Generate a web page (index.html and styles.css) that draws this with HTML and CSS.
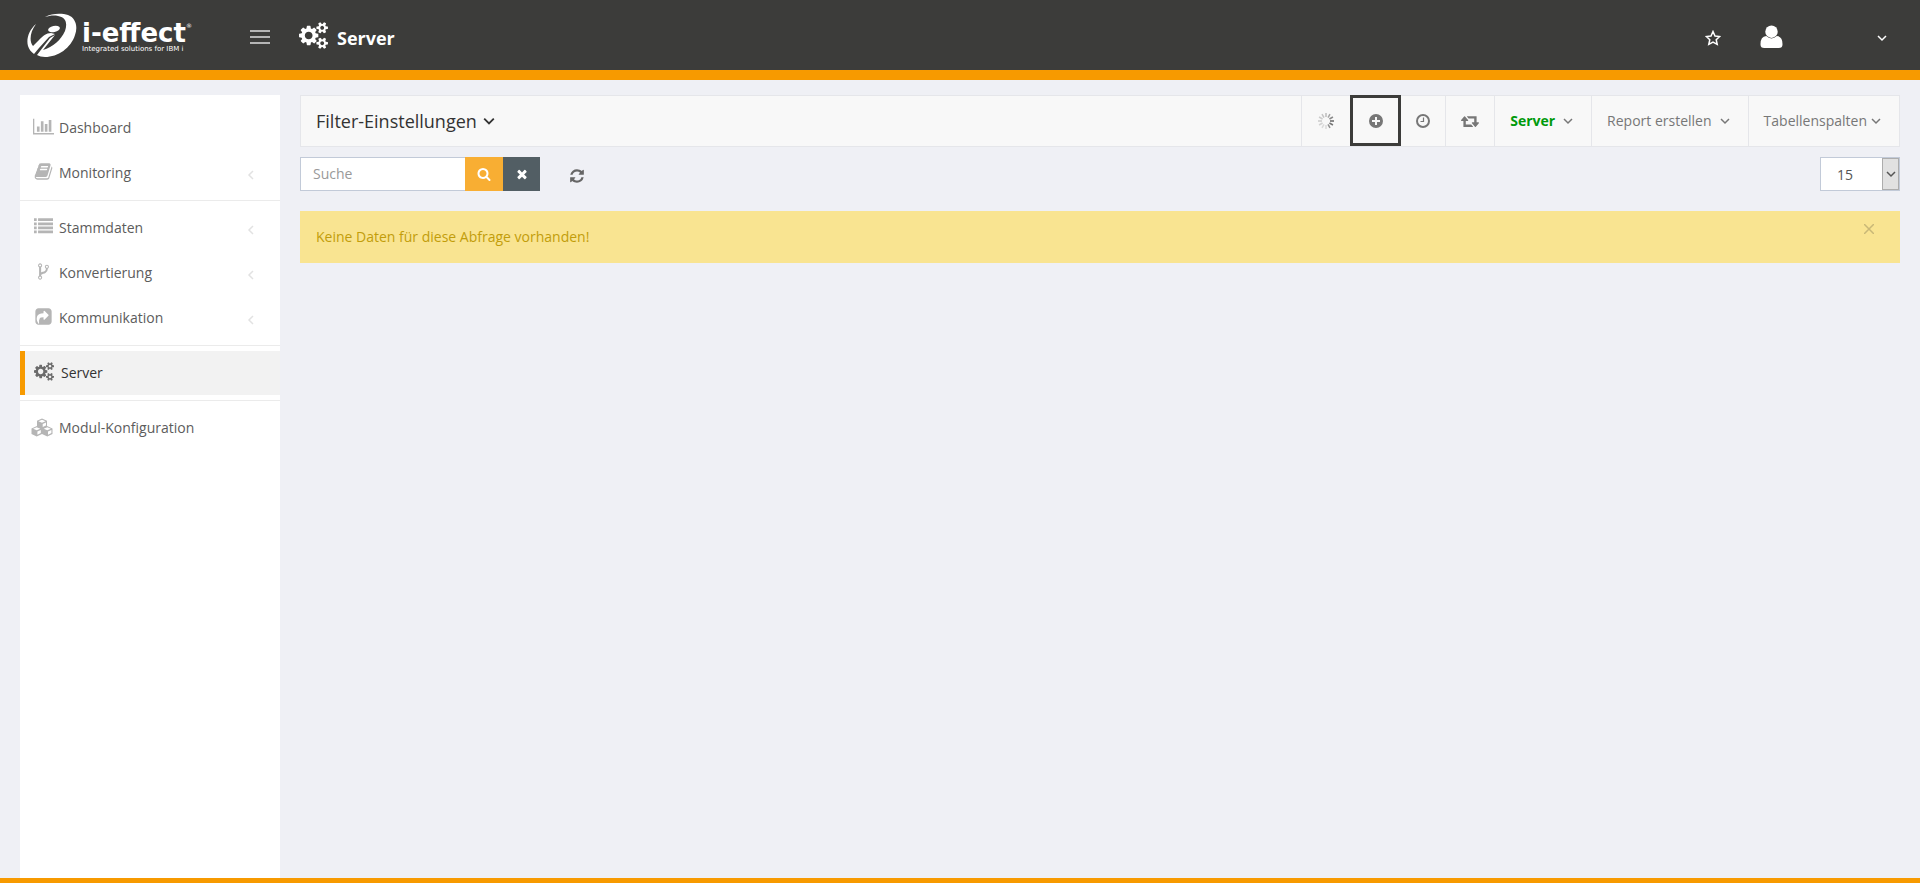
FILE: index.html
```html
<!DOCTYPE html>
<html lang="de">
<head>
<meta charset="utf-8">
<title>i-effect – Server</title>
<link rel="stylesheet" href="styles.css">
</head>
<body>
<svg class="sprite" aria-hidden="true">
  <symbol id="cogs" viewBox="0 0 1920 1792"><path d="M896 896q0-106-75-181t-181-75-181 75-75 181 75 181 181 75 181-75 75-181zm768 512q0-52-38-90t-90-38-90 38-38 90q0 53 37.500 90.500t90.500 37.500 90.500-37.500 37.500-90.500zm0-1024q0-52-38-90t-90-38-90 38-38 90q0 53 37.500 90.500t90.500 37.500 90.500-37.500 37.500-90.500zm-384 421v185q0 10-7 19.500t-16 10.500l-155 24q-11 35-32 76 34 48 90 115 7 11 7 20 0 12-7 19-23 30-82.500 89.500t-78.500 59.500q-11 0-21-7l-115-90q-37 19-77 31-11 108-23 155-7 24-30 24h-186q-11 0-20-7.500t-10-17.500l-23-153q-34-10-75-31l-118 89q-7 7-20 7-11 0-21-8-144-133-144-160 0-9 7-19 10-14 41-53t47-61q-23-44-35-82l-152-24q-10-1-17-9.500t-7-19.500v-185q0-10 7-19.500t16-10.500l155-24q11-35 32-76-34-48-90-115-7-11-7-20 0-12 7-20 22-30 82-89t79-59q11 0 21 7l115 90q34-18 77-32 11-108 23-154 7-24 30-24h186q11 0 20 7.500t10 17.500l23 153q34 10 75 31l118-89q8-7 20-7 11 0 21 8 144 133 144 160 0 8-7 19-12 16-42 54t-45 60q23 48 34 82l152 23q10 2 17 10.500t7 19.500zm640 533v140q0 16-149 31-12 27-30 52 51 113 51 138 0 4-4 7-122 71-124 71-8 0-46-47t-52-68q-20 2-30 2t-30-2q-14 21-52 68t-46 47q-2 0-124-71-4-3-4-7 0-25 51-138-18-25-30-52-149-15-149-31v-140q0-16 149-31 13-29 30-52-51-113-51-138 0-4 4-7 4-2 35-20t59-34 30-16q8 0 46 46.500t52 67.500q20-2 30-2t30 2q51-71 92-112l6-2q4 0 124 70 4 3 4 7 0 25-51 138 17 23 30 52 149 15 149 31zm0-1024v140q0 16-149 31-12 27-30 52 51 113 51 138 0 4-4 7-122 71-124 71-8 0-46-47t-52-68q-20 2-30 2t-30-2q-14 21-52 68t-46 47q-2 0-124-71-4-3-4-7 0-25 51-138-18-25-30-52-149-15-149-31v-140q0-16 149-31 13-29 30-52-51-113-51-138 0-4 4-7 4-2 35-20t59-34 30-16q8 0 46 46.500t52 67.500q20-2 30-2t30 2q51-71 92-112l6-2q4 0 124 70 4 3 4 7 0 25-51 138 17 23 30 52 149 15 149 31z"/></symbol>
  <symbol id="chart" viewBox="0 0 2048 1792"><path d="M640 896v512h-256v-512h256zm384-512v1024h-256v-1024h256zm1024 1152v128h-2048v-1536h128v1408h1920zm-640-896v768h-256v-768h256zm384-384v1152h-256v-1152h256z"/></symbol>
  <symbol id="book" viewBox="0 0 1792 1792"><path d="M1703 478q40 57 18 129l-275 906q-19 64-76.500 107.500t-122.500 43.500h-923q-77 0-148.500-53.500t-99.500-131.500q-24-67-2-127 0-4 3-27t4-37q1-8-3-21.500t-3-19.500q2-11 8-21t16.500-23.500 16.500-23.500q23-38 45-91.500t30-91.500q3-10 .5-30t-.5-28q3-11 17-28t17-23q21-36 42-92t25-90q1-9-2.500-32t.5-28q4-13 22-30.500t22-22.500q19-26 42.500-84.500t27.500-96.500q1-8-3-25.500t-2-26.500q2-8 9-18t18-23 17-21q8-12 16.500-30.500t15-35 16-36 19.500-32 26.500-23.500 36-11.500 47.500 5.500l-1 3q38-9 51-9h761q74 0 114 56t18 130l-274 906q-36 119-71.500 153.500t-128.500 34.500h-869q-27 0-38 15-11 16-1 43 24 70 144 70h923q29 0 56-15.500t35-41.500l300-987q7-22 5-57 38 15 59 43zm-1064 2q-4 13 2 22.500t20 9.500h608q13 0 25.500-9.500t16.500-22.500l21-64q4-13-2-22.500t-20-9.500h-608q-13 0-25.500 9.500t-16.500 22.500zm-83 256q-4 13 2 22.500t20 9.500h608q13 0 25.500-9.500t16.500-22.500l21-64q4-13-2-22.500t-20-9.500h-608q-13 0-25.500 9.500t-16.500 22.500z"/></symbol>
  <symbol id="list" viewBox="0 0 1792 1792"><path d="M0 128h256v256H0zM384 128h1408v256H384zM0 512h256v256H0zM384 512h1408v256H384zM0 896h256v256H0zM384 896h1408v256H384zM0 1280h256v256H0zM384 1280h1408v256H384z"/></symbol>
  <symbol id="fork" viewBox="0 0 1792 1792"><path d="M672 1472q0-40-28-68t-68-28-68 28-28 68 28 68 68 28 68-28 28-68zm0-1152q0-40-28-68t-68-28-68 28-28 68 28 68 68 28 68-28 28-68zm640 128q0-40-28-68t-68-28-68 28-28 68 28 68 68 28 68-28 28-68zm96 0q0 52-26 96.500t-70 69.500q-2 287-226 414-67 38-203 81-128 40-169.500 71t-41.500 100v26q44 25 70 69.500t26 96.500q0 80-56 136t-136 56-136-56-56-136q0-52 26-96.500t70-69.500v-820q-44-25-70-69.500t-26-96.500q0-80 56-136t136-56 136 56 56 136q0 52-26 96.500t-70 69.500v497q54-26 154-57 55-17 87.500-29.500t70.500-31 59-39.500 40.500-51 28-69.500 8.500-91.500q-44-25-70-69.500t-26-96.500q0-80 56-136t136-56 136 56 56 136z"/></symbol>
  <symbol id="share" viewBox="0 0 1792 1792"><path d="M1005 1179l352-352q19-19 19-45t-19-45l-352-352q-30-31-69-14-40 17-40 59v160q-119 0-216 19.500t-162.500 51-114 79-76.500 95.500-44.500 109-21.500 111.500-5 110.500q0 181 167 404 11 12 25 12 7 0 13-3 22-9 19-33-44-354 62-473 46-52 130-75.500t224-23.500v160q0 42 40 59 12 5 24 5 26 0 45-19zm659-763v960q0 119-84.500 203.500t-203.500 84.500h-960q-119 0-203.500-84.500t-84.500-203.500v-960q0-119 84.500-203.500t203.500-84.500h960q119 0 203.500 84.500t84.500 203.500z"/></symbol>
  <symbol id="cubes" viewBox="0 0 22 18"><path d="M11 0 L16 2.200 V7.400 L21.500 10 V15.400 L16.300 18 L11 15.400 L5.700 18 L.5 15.400 V10 L6 7.400 V2.200Z"/><path class="cut" d="M11 1.200 L14.600 2.700 L11 4.300 L7.400 2.700Z M11.700 5.500 L15 4 V7 L11.700 8.500Z M5.700 8.700 L9.300 10.200 L5.700 11.800 L2.100 10.200Z M6.400 13 L9.800 11.500 V14.600 L6.400 16.300Z M16.300 8.700 L19.900 10.200 L16.300 11.800 L12.700 10.200Z M17 13 L20.400 11.500 V14.600 L17 16.300Z"/></symbol>
  <symbol id="search" viewBox="0 0 1792 1792"><path d="M1216 832q0-185-131.500-316.500t-316.500-131.500-316.500 131.500-131.500 316.500 131.500 316.500 316.500 131.500 316.500-131.500 131.500-316.500zm512 832q0 52-38 90t-90 38q-54 0-90-38l-343-342q-179 124-399 124-143 0-273.500-55.500t-225-150-150-225-55.500-273.500 55.500-273.500 150-225 225-150 273.500-55.500 273.500 55.500 225 150 150 225 55.500 273.500q0 220-124 399l343 343q37 37 37 90z"/></symbol>
  <symbol id="times" viewBox="0 0 1792 1792"><path d="M1490 1322q0 40-28 68l-136 136q-28 28-68 28t-68-28l-294-294-294 294q-28 28-68 28t-68-28l-136-136q-28-28-28-68t28-68l294-294-294-294q-28-28-28-68t28-68l136-136q28-28 68-28t68 28l294 294 294-294q28-28 68-28t68 28l136 136q28 28 28 68t-28 68l-294 294 294 294q28 28 28 68z"/></symbol>
  <symbol id="refresh" viewBox="0 0 1792 1792"><path d="M1639 1056q0 5-1 7-64 268-268 434.500t-478 166.500q-146 0-282.500-55t-243.500-157l-129 129q-19 19-45 19t-45-19-19-45v-448q0-26 19-45t45-19h448q26 0 45 19t19 45-19 45l-137 137q71 66 161 102t187 36q134 0 250-65t186-179q11-17 53-117 8-23 30-23h192q13 0 22.500 9.500t9.500 22.500zm25-800v448q0 26-19 45t-45 19h-448q-26 0-45-19t-19-45 19-45l138-138q-148-137-349-137-134 0-250 65t-186 179q-11 17-53 117-8 23-30 23h-199q-13 0-22.500-9.500t-9.500-22.500v-7q65-268 270-434.500t480-166.500q146 0 284 55.500t245 156.500l130-129q19-19 45-19t45 19 19 45z"/></symbol>
  <symbol id="retweet" viewBox="0 0 1920 1792"><path d="M1280 1504q0 13-9.500 22.500t-22.500 9.500h-960q-8 0-13.500-2t-9-7-5.500-8-3-11.500-1-11.500v-600h-192q-26 0-45-19t-19-45q0-24 15-41l320-384q19-22 49-22t49 22l320 384q15 17 15 41 0 26-19 45t-45 19h-192v384h576q16 0 25 11l160 192q7 10 7 21zm640-416q0 24-15 41l-320 384q-20 23-49 23t-49-23l-320-384q-15-17-15-41 0-26 19-45t45-19h192v-384h-576q-16 0-25-12l-160-192q-7-9-7-20 0-13 9.500-22.500t22.500-9.500h960q8 0 13.500 2t9 7 5.500 8 3 11.500 1 11.500v600h192q26 0 45 19t19 45z"/></symbol>
  <symbol id="down" viewBox="0 0 10 10"><path class="line" d="M1 3 L5 7 L9 3"/></symbol>
  <symbol id="left" viewBox="0 0 10 10"><path class="line" d="M7 1 L3 5 L7 9"/></symbol>
</svg>

<header class="header">
  <a class="logo" href="#" aria-label="i-effect">
    <svg class="logo-mark" viewBox="0 0 50 44" aria-hidden="true">
      <path d="M18 4 C25 0 35 0 41 2 C49 5 51 14 48 22 C44 35 31 44 18 44 C15 44 12 43 10 42 L23 25 L28 22 L16 37 C26 34 34 27 38 18 C41 9 38 4 31 3 C26 2 22 3 18 4Z"/>
      <path d="M9 11 C2 17 -1 26 1 33 C2 36 4 39 7 41 L12 35 L22 24 L28 21 L24 20 C19 20 16 23 12 27 L6 33 C2 28 3 19 9 11Z"/>
      <ellipse cx="27" cy="16" rx="6" ry="3" transform="rotate(-12 27 16)"/>
    </svg>
    <span class="logo-words"><span class="logo-name">i-effect<sup class="logo-reg">®</sup></span><span class="logo-tag">Integrated solutions for IBM i</span></span>
  </a>
  <button class="burger" type="button" aria-label="Menü"><span></span><span></span><span></span></button>
  <h1 class="title"><svg class="title-icon"><use href="#cogs"/></svg>Server</h1>
  <div class="header-tools">
    <button class="plain" type="button" aria-label="Favoriten"><svg class="i16" viewBox="0 0 16 16"><path class="line" d="M8 1.500 L10 6 L14.700 6.500 L11.200 9.700 L12.200 14.300 L8 12 L3.800 14.300 L4.800 9.700 L1.300 6.500 L6 6Z"/></svg></button>
    <button class="plain user" type="button" aria-label="Benutzer"><svg class="user-icon" viewBox="0 0 24 24"><circle cx="12" cy="7" r="6.500"/><path d="M6.500 11.500 Q12 16.500 17.500 11.500 Q23.500 12 23.500 20 Q23.500 24 19.500 24 H4.500 Q.5 24 .5 20 Q.5 12 6.500 11.500Z"/></svg></button>
    <button class="plain" type="button" aria-label="Benutzermenü"><svg class="i10 bold"><use href="#down"/></svg></button>
  </div>
</header>

<div class="body">
  <nav class="sidebar">
    <ul class="group">
      <li><a class="nav" href="#"><svg class="nav-icon wide"><use href="#chart"/></svg>Dashboard</a></li>
      <li><a class="nav" href="#"><svg class="nav-icon"><use href="#book"/></svg>Monitoring<svg class="caret"><use href="#left"/></svg></a></li>
    </ul>
    <ul class="group">
      <li><a class="nav" href="#"><svg class="nav-icon"><use href="#list"/></svg>Stammdaten<svg class="caret"><use href="#left"/></svg></a></li>
      <li><a class="nav" href="#"><svg class="nav-icon"><use href="#fork"/></svg>Konvertierung<svg class="caret"><use href="#left"/></svg></a></li>
      <li><a class="nav" href="#"><svg class="nav-icon"><use href="#share"/></svg>Kommunikation<svg class="caret"><use href="#left"/></svg></a></li>
    </ul>
    <ul class="group">
      <li><a class="nav active" href="#" aria-current="page"><svg class="nav-icon wide"><use href="#cogs"/></svg>Server</a></li>
    </ul>
    <ul class="group">
      <li><a class="nav" href="#"><svg class="nav-icon cubes"><use href="#cubes"/></svg>Modul-Konfiguration</a></li>
    </ul>
  </nav>

  <main class="main">
    <div class="toolbar">
      <button class="filter" type="button">Filter-Einstellungen<svg class="i12"><use href="#down"/></svg></button>
      <button class="tool icon-tool" type="button" aria-label="Laden"><svg class="spinner" viewBox="-9 -9 18 18"><path d="M0-4V-8" opacity=".4"/><path d="M0-4V-8" transform="rotate(30)" opacity=".55"/><path d="M0-4V-8" transform="rotate(60)" opacity=".75"/><path d="M0-4V-8" transform="rotate(90)"/><path d="M0-4V-8" transform="rotate(120)" opacity=".9"/><path d="M0-4V-8" transform="rotate(150)" opacity=".7"/><path d="M0-4V-8" transform="rotate(180)" opacity=".2"/><path d="M0-4V-8" transform="rotate(210)" opacity=".2"/><path d="M0-4V-8" transform="rotate(240)" opacity=".25"/><path d="M0-4V-8" transform="rotate(270)" opacity=".3"/><path d="M0-4V-8" transform="rotate(300)" opacity=".3"/><path d="M0-4V-8" transform="rotate(330)" opacity=".35"/></svg></button>
      <button class="tool selected" type="button" aria-label="Neu"><svg class="i14" viewBox="0 0 14 14"><path fill-rule="evenodd" d="M7 0a7 7 0 1 1 0 14a7 7 0 1 1 0-14ZM6 3V6H3V8H6V11H8V8H11V6H8V3Z"/></svg></button>
      <button class="tool icon-tool" type="button" aria-label="Verlauf"><svg class="i14" viewBox="0 0 14 14"><circle class="line heavy" cx="7" cy="7" r="6"/><path class="line thin" d="M7.500 3.500V7.500H4.500"/></svg></button>
      <button class="tool icon-tool" type="button" aria-label="Wiederholen"><svg class="retweet"><use href="#retweet"/></svg></button>
      <button class="tool server" type="button">Server<svg class="i10"><use href="#down"/></svg></button>
      <button class="tool" type="button">Report erstellen<svg class="i10"><use href="#down"/></svg></button>
      <button class="tool close-caret" type="button">Tabellenspalten<svg class="i10"><use href="#down"/></svg></button>
    </div>

    <div class="search-row">
      <form class="search">
        <input class="search-input" type="text" placeholder="Suche" aria-label="Suche">
        <button class="search-go" type="button" aria-label="Suchen"><svg class="i14"><use href="#search"/></svg></button>
        <button class="search-clear" type="button" aria-label="Zurücksetzen"><svg class="i14"><use href="#times"/></svg></button>
      </form>
      <button class="plain reload" type="button" aria-label="Aktualisieren"><svg class="i16"><use href="#refresh"/></svg></button>
      <div class="size">
        <select class="size-select" aria-label="Zeilen pro Seite"><option>15</option><option>25</option><option>50</option></select>
        <span class="size-arrow"><svg class="i10"><use href="#down"/></svg></span>
      </div>
    </div>

    <div class="alert" role="alert">
      <span>Keine Daten für diese Abfrage vorhanden!</span>
      <button class="plain alert-close" type="button" aria-label="Schließen"><svg class="i10" viewBox="0 0 10 10"><path class="line" d="M0 0 L10 10 M10 0 L0 10"/></svg></button>
    </div>
  </main>
</div>
<footer class="footer"></footer>
</body>
</html>
```

FILE: styles.css
```css
* { box-sizing: border-box; }

body {
  margin: 0;
  min-height: 100vh;
  display: flex;
  flex-direction: column;
  background: #eff0f5;
  color: #555;
  font: 14px/20px "Open Sans", "Noto Sans", sans-serif;
}

button, input, select { font: inherit; color: inherit; margin: 0; }
button { border: 0; background: none; padding: 0; cursor: pointer; }
svg { display: block; flex: none; fill: currentColor; }
.sprite { position: absolute; width: 0; height: 0; }
.line { fill: none; stroke: currentColor; stroke-width: 1.500; }
.thin { stroke-width: 1.200; }
.heavy { stroke-width: 2; }
.i10 { width: 10px; height: 10px; }
.i12 { width: 12px; height: 12px; }
.i14 { width: 14px; height: 14px; }
.i16 { width: 16px; height: 16px; }

/* Header */
.header {
  display: flex;
  align-items: center;
  height: 80px;
  padding: 0 33px 0 27px;
  background: #3c3c3a;
  border-bottom: 10px solid #f79a00;
  color: #fff;
}
.logo { display: flex; gap: 5px; width: 223px; color: #fff; text-decoration: none; }
.logo-mark { width: 50px; height: 44px; }
.logo-words { display: flex; flex-direction: column; padding-top: 8px; white-space: nowrap; font-family: "DejaVu Sans", sans-serif; }
.logo-name { font-size: 26px; line-height: 24px; font-weight: 700; }
.logo-reg { font-size: 6px; line-height: 6px; vertical-align: 14px; font-weight: 400; }
.logo-tag { font-size: 7px; line-height: 8px; }
.burger { display: flex; flex-direction: column; gap: 4px; width: 20px; margin-top: 4px; }
.burger span { height: 2px; background: #b5b5b5; }
.title { display: flex; align-items: center; gap: 9px; margin: 5px 0 0 29px; font-size: 18px; line-height: 24px; font-weight: 700; }
.title-icon { width: 29px; height: 27px; margin-bottom: 4px; }
.header-tools { display: flex; align-items: center; margin: 5px 0 0 auto; }
.user { margin: 0 94px 0 39px; }
.user-icon { width: 23px; height: 23px; margin-bottom: 2px; }

/* Page body */
.body { flex: 1; display: flex; gap: 20px; padding: 15px 20px 0; }

/* Sidebar */
.sidebar { width: 260px; padding-top: 6px; background: #fff; }
.group { display: flex; flex-direction: column; gap: 1px; margin: 0; padding: 5px 0; list-style: none; }
.group + .group { border-top: 1px solid #ebebeb; }
.nav { display: flex; align-items: center; height: 44px; padding: 0 24px 0 10px; color: #5c5c5c; text-decoration: none; }
.nav-icon { width: 19px; height: 19px; margin: 0 6px 4px 4px; color: #b5b5b5; }
.nav-icon.wide { width: 21px; margin: 0 5px 4px 3px; }
.nav-icon.cubes { width: 22px; margin: 0 6px 2px 1px; }
.cut { fill: #fff; }
.caret { width: 10px; height: 10px; margin: 4px 0 0 auto; color: #e2e2e2; }
.nav.active { padding-left: 7px; border-left: 5px solid #f79a00; background: #f2f2f2; color: #333; }
.nav.active .nav-icon { width: 20px; color: #6b6b6b; margin-left: 2px; margin-right: 7px; }

/* Main column */
.main { flex: 1; min-width: 0; display: flex; flex-direction: column; }
.toolbar { display: flex; height: 52px; border: 1px solid #e5e6ea; background: #f8f8f8; }
.filter { display: flex; align-items: center; gap: 6px; margin-right: auto; padding: 0 15px; font-size: 18px; color: #333; }
.tool { display: flex; align-items: center; gap: 8px; padding: 0 18px 0 15px; border-left: 1px solid #e5e6ea; color: #777; }
.icon-tool { padding: 0 15px; }
.spinner { width: 18px; height: 18px; stroke: #666; stroke-width: 1.500; }
.tool.selected { justify-content: center; width: 51px; margin: -1px 0 0; padding: 0; border: 3px solid #3c3c3a; }
.tool.selected + .tool { border-left: 0; }
.retweet { width: 18px; height: 18px; }
.server { color: #009a0c; font-weight: 700; }
.server svg { color: #777; }
.close-caret { gap: 4px; }

.search-row { display: flex; margin-top: 10px; }
.search { display: flex; }
.search-input { width: 165px; height: 34px; padding: 0 12px 2px; border: 1px solid #c2cad8; border-right: 0; background: #fff; outline: 0; }
.search-input::placeholder { color: #999; opacity: 1; }
.search-go, .search-clear { display: flex; align-items: center; justify-content: center; width: 38px; color: #fff; background: #f8ae33; }
.search-clear { width: 37px; background: #525e64; }
.reload { margin: 4px 0 0 29px; color: #666; }
.size { position: relative; margin-left: auto; }
.size-select { width: 80px; height: 34px; padding: 2px 16px 0; border: 1px solid #c2cad8; border-radius: 0; background: #fff; appearance: none; }
.size-arrow { position: absolute; top: 1px; right: 1px; bottom: 1px; display: flex; align-items: center; justify-content: center; width: 17px; border: 1px solid #adadad; background: #e1e1e1; pointer-events: none; }

.alert { display: flex; justify-content: space-between; align-items: flex-start; margin-top: 20px; padding: 16px 26px 16px 16px; background: #f9e491; color: #c29d0b; }
.alert-close { margin-top: -3px; color: #c9b877; }

.footer { height: 5px; background: #f79a00; }
```
